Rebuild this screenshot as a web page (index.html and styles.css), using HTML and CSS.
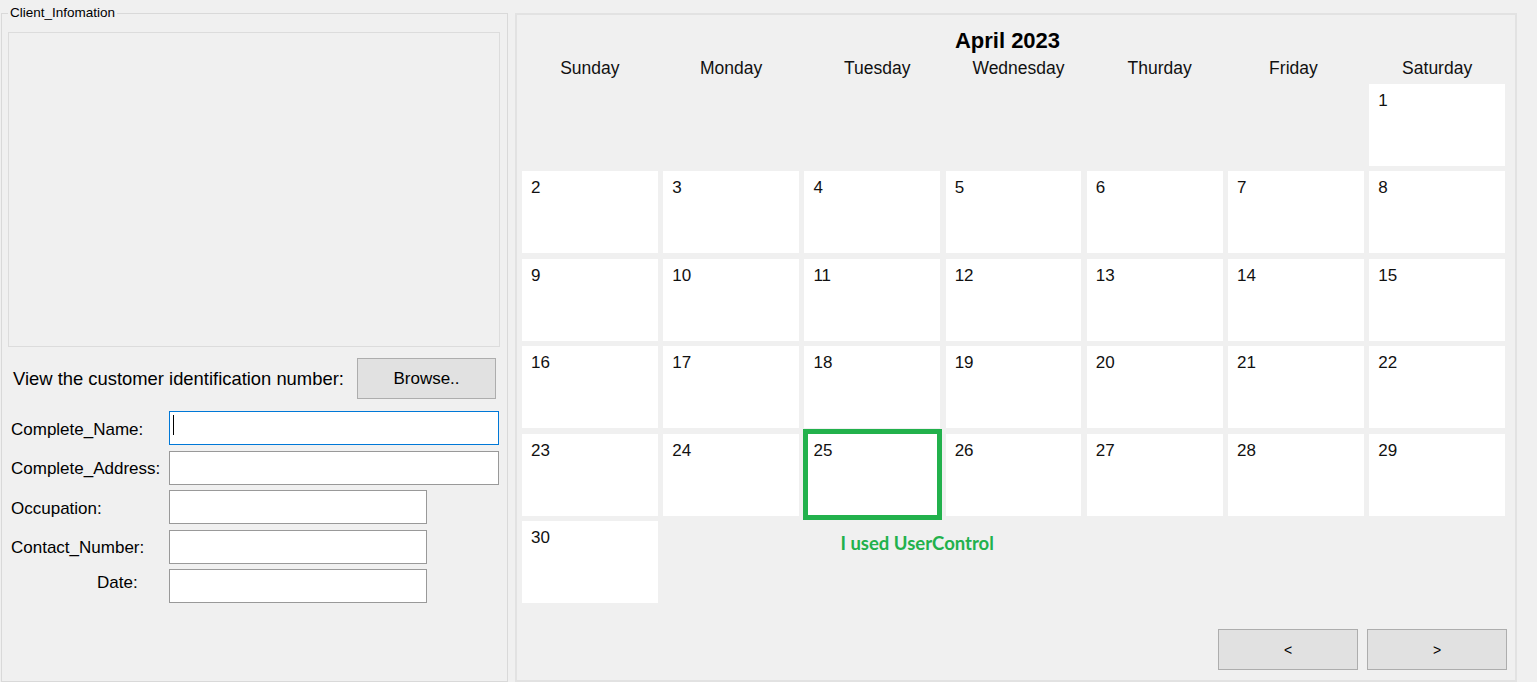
FILE: index.html
```html
<!DOCTYPE html>
<html lang="en">
<head>
    <meta charset="UTF-8">
    <meta name="viewport" content="width=device-width, initial-scale=1.0">
    <title>Client Information - Calendar</title>
    <link rel="stylesheet" href="styles.css">
</head>
<body>
    <div class="window">
        <!-- Client details group -->
        <fieldset class="client-box">
            <legend>Client_Infomation</legend>
            <div class="photo-box"></div>

            <div class="id-row">
                <span class="id-label">View the customer identification number:</span>
                <button class="win-btn browse-btn">Browse..</button>
            </div>

            <div class="field-list">
                <label for="name">Complete_Name:</label>
                <span class="input-wrap focused"><input type="text" id="name" class="wide"></span>

                <label for="address">Complete_Address:</label>
                <span class="input-wrap"><input type="text" id="address" class="wide"></span>

                <label for="occupation">Occupation:</label>
                <span class="input-wrap"><input type="text" id="occupation"></span>

                <label for="contact">Contact_Number:</label>
                <span class="input-wrap"><input type="text" id="contact"></span>

                <label for="date" class="date-label">Date:</label>
                <span class="input-wrap"><input type="text" id="date"></span>
            </div>
        </fieldset>

        <!-- Calendar -->
        <div class="calendar-panel">
            <div class="month-title">April 2023</div>

            <div class="calendar-grid" id="calendarGrid">
                <div class="day-name">Sunday</div>
                <div class="day-name">Monday</div>
                <div class="day-name shift-right">Tuesday</div>
                <div class="day-name shift-right">Wednesday</div>
                <div class="day-name shift-right">Thurday</div>
                <div class="day-name shift-left">Friday</div>
                <div class="day-name">Saturday</div>
            </div>

            <div class="pager">
                <button class="win-btn pager-btn">&lt;</button>
                <button class="win-btn pager-btn">&gt;</button>
            </div>
        </div>
    </div>

    <script>
        // Build the day boxes for April 2023 (1st falls on Saturday)
        const grid = document.getElementById('calendarGrid');
        const firstDay = 6;
        const daysInMonth = 30;

        for (let i = 0; i < firstDay; i++) {
            const blank = document.createElement('div');
            blank.className = 'blank';
            grid.appendChild(blank);
        }

        for (let d = 1; d <= daysInMonth; d++) {
            const box = document.createElement('div');
            box.className = 'day-box';
            if (d === 25) {
                box.classList.add('marked');
            }
            box.textContent = d;
            grid.appendChild(box);
        }

        // Note under the marked day
        const note = document.createElement('div');
        note.className = 'note';
        note.textContent = 'I used UserControl';
        grid.appendChild(note);
    </script>
</body>
</html>
```

FILE: styles.css
```css
body {
    font-family: "Liberation Sans", Arial, sans-serif;
    background-color: #f0f0f0;
    color: #000;
    margin: 0;
    padding: 0;
}

.window {
    display: flex;
    align-items: flex-start;
    width: 1537px;
    height: 682px;
    overflow: hidden;
}

/* Left group box */
.client-box {
    box-sizing: border-box;
    width: 507px;
    height: 677px;
    margin: 5px 0 0 1px;
    padding: 0;
    border: 1px solid #d9d9d9;
    min-width: 0;
}

.client-box legend {
    font-size: 13.5px;
    line-height: 16px;
    padding: 0 2px;
    margin-left: 6px;
    color: #000;
}

.photo-box {
    box-sizing: border-box;
    width: 492px;
    height: 315px;
    margin: 11px 0 0 6px;
    border: 1px solid #dcdcdc;
}

.id-row {
    display: flex;
    align-items: center;
    margin-top: 11px;
    padding-left: 11px;
}

.id-label {
    font-size: 18.4px;
}

.win-btn {
    font-family: "Liberation Sans", Arial, sans-serif;
    background-color: #e1e1e1;
    border: 1px solid #adadad;
    color: #000;
    padding: 0;
    cursor: pointer;
}

.browse-btn {
    box-sizing: border-box;
    width: 139px;
    height: 41px;
    margin-left: auto;
    margin-right: 11px;
    font-size: 17px;
}

.field-list {
    display: grid;
    grid-template-columns: 158px auto;
    grid-auto-rows: 34px;
    row-gap: 5.6px;
    margin-top: 12px;
    padding-left: 9px;
}

.field-list label {
    font-size: 17px;
    align-self: center;
    padding-top: 3px;
}

.field-list .date-label {
    padding-top: 0;
    padding-left: 86px;
    margin-bottom: 7px;
}

.input-wrap {
    position: relative;
    display: block;
}

.input-wrap input {
    box-sizing: border-box;
    width: 258px;
    height: 34px;
    margin: 0;
    padding: 2px 4px;
    border: 1px solid #999;
    background-color: #fff;
    font-family: "Liberation Sans", Arial, sans-serif;
    font-size: 16px;
    outline: none;
}

.input-wrap input.wide {
    width: 330px;
}

.input-wrap.focused input {
    border-color: #0078d7;
}

/* text caret of the focused box */
.input-wrap.focused::after {
    content: "";
    position: absolute;
    left: 4px;
    top: 4px;
    width: 1px;
    height: 20px;
    background-color: #000;
}

/* Calendar panel */
.calendar-panel {
    box-sizing: border-box;
    display: flex;
    flex-direction: column;
    width: 1002px;
    height: 669px;
    margin: 13px 0 0 7px;
    padding: 13px 10px 10px 5px;
    border: 2px solid #e2e2e2;
}

.month-title {
    font-size: 22px;
    font-weight: bold;
    line-height: 25px;
    text-align: center;
    padding-right: 12px;
}

.calendar-grid {
    display: grid;
    grid-template-columns: repeat(7, 1fr);
    grid-template-rows: 20px repeat(6, 82px);
    gap: 5.5px;
    margin-top: 5px;
}

.day-name {
    font-size: 17.5px;
    line-height: 20px;
    text-align: center;
    color: #111;
}

.day-name.shift-right {
    padding-left: 10px;
}

.day-name.shift-left {
    padding-right: 5px;
}

.day-box {
    position: relative;
    background-color: #fff;
    font-size: 17px;
    line-height: 20px;
    padding: 7px 9px 5px;
    color: #111;
}

.day-box.marked::after {
    content: "";
    position: absolute;
    top: -5px;
    left: -1.5px;
    right: -1.5px;
    bottom: -4px;
    border: 5px solid #22b14c;
}

.note {
    grid-column: 3 / span 2;
    grid-row: 7;
    align-self: start;
    margin-top: 11px;
    padding-left: 36px;
    font-family: Lato, "Open Sans", sans-serif;
    font-weight: bold;
    font-size: 18.5px;
    line-height: 22px;
    color: #22b14c;
}

.pager {
    display: flex;
    justify-content: flex-end;
    gap: 9px;
    margin-top: auto;
    margin-right: -2px;
}

.pager-btn {
    box-sizing: border-box;
    width: 140px;
    height: 41px;
    font-size: 14px;
}
```
